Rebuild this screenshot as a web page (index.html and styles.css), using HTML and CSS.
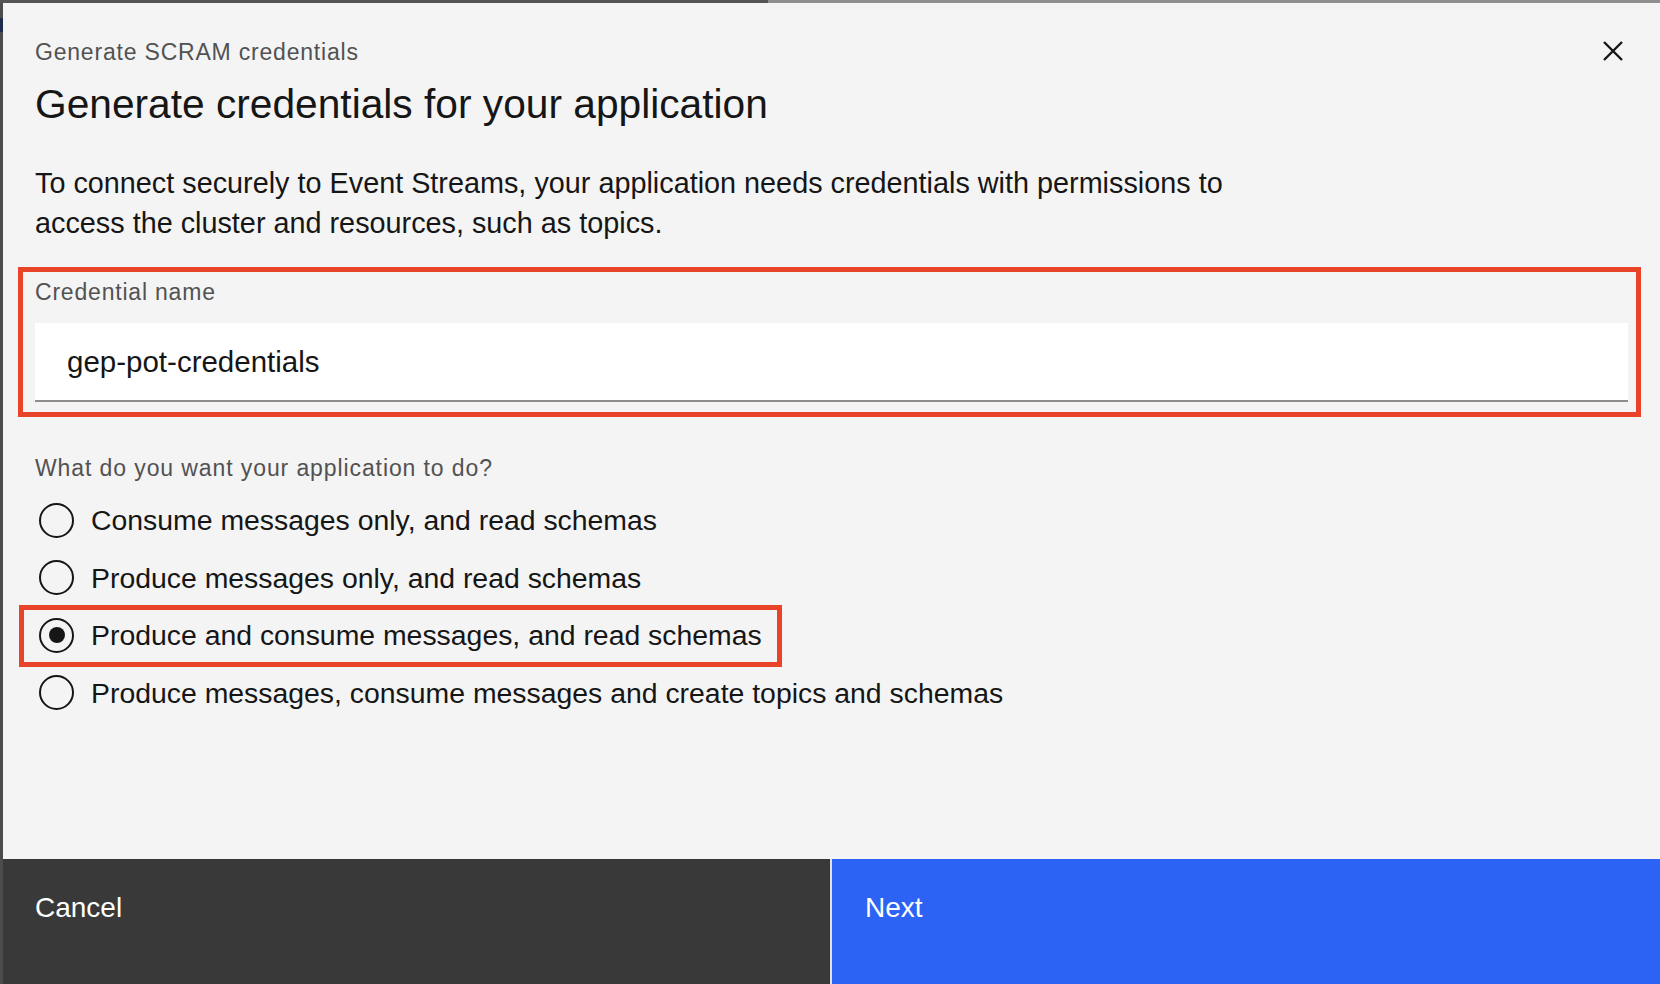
FILE: index.html
```html
<!DOCTYPE html>
<html lang="en">
<head>
<meta charset="utf-8">
<title>Generate SCRAM credentials</title>
<link rel="stylesheet" href="styles.css">
</head>
<body>
<div class="screen">
  <div class="top-strip">
    <span class="top-strip-dark"></span>
    <span class="top-strip-light"></span>
  </div>
  <div class="screen-row">
    <div class="left-strip"><span class="left-strip-accent"></span></div>
    <div class="modal" role="dialog" aria-labelledby="modal-title">
      <div class="modal-header">
        <div class="heading">
          <p class="modal-label">Generate SCRAM credentials</p>
          <h2 class="modal-title" id="modal-title">Generate credentials for your application</h2>
        </div>
        <button class="close-btn" type="button" aria-label="Close">
          <svg width="20" height="20" viewBox="0 0 20 20" aria-hidden="true">
            <path d="M1 1 L19 19 M19 1 L1 19" stroke="#161616" stroke-width="2.4" fill="none"/>
          </svg>
        </button>
      </div>
      <div class="modal-body">
        <p class="intro">To connect securely to Event Streams, your application needs credentials with permissions to access the cluster and resources, such as topics.</p>
        <div class="field annot">
          <label class="field-label" for="cred-name">Credential name</label>
          <div class="text-input" id="cred-name">gep-pot-credentials</div>
        </div>
        <p class="question">What do you want your application to do?</p>
        <div class="radio-group">
          <div class="radio-item"><span class="radio"></span><span class="radio-text">Consume messages only, and read schemas</span></div>
          <div class="radio-item"><span class="radio"></span><span class="radio-text">Produce messages only, and read schemas</span></div>
          <div class="radio-item annot annot-radio"><span class="radio checked"></span><span class="radio-text">Produce and consume messages, and read schemas</span></div>
          <div class="radio-item"><span class="radio"></span><span class="radio-text">Produce messages, consume messages and create topics and schemas</span></div>
        </div>
      </div>
      <div class="modal-footer">
        <button class="btn btn-secondary" type="button">Cancel</button>
        <button class="btn btn-primary" type="button">Next</button>
      </div>
    </div>
  </div>
</div>
</body>
</html>
```

FILE: styles.css
```css
* { box-sizing: border-box; }

html, body {
  margin: 0;
  padding: 0;
  width: 1660px;
  height: 984px;
  overflow: hidden;
  font-family: "Liberation Sans", Arial, sans-serif;
  color: #161616;
}

.screen {
  display: flex;
  flex-direction: column;
  width: 1660px;
  height: 984px;
  background: #4a4a4a;
}

.top-strip {
  display: flex;
  height: 3px;
  flex: none;
}
.top-strip-dark { width: 768px; background: #555555; }
.top-strip-light { flex: 1; background: #8f8f8f; }

.screen-row {
  display: flex;
  flex: 1;
  min-height: 0;
}

.left-strip {
  width: 3px;
  flex: none;
  background: #4c4c4c;
  padding-top: 15px;
}
.left-strip-accent {
  display: block;
  height: 14px;
  background: #1f2d4d;
}

.modal {
  flex: 1;
  display: flex;
  flex-direction: column;
  background: #f4f4f4;
}

.modal-header {
  display: flex;
  justify-content: space-between;
  align-items: flex-start;
  padding: 24px 23px 0 32px;
}

.heading { padding-top: 11px; }

.modal-label {
  margin: 0;
  font-size: 23px;
  line-height: 28px;
  letter-spacing: 0.8px;
  color: #525252;
}

.modal-title {
  margin: 14px 0 0;
  font-size: 40.7px;
  line-height: 48px;
  font-weight: 400;
  color: #161616;
}

.close-btn {
  width: 48px;
  height: 48px;
  border: 0;
  padding: 0;
  background: transparent;
  display: flex;
  align-items: center;
  justify-content: center;
}

.modal-body {
  padding: 0 32px;
  display: flex;
  flex-direction: column;
}

.intro {
  margin: 35px 0 0;
  max-width: 1260px;
  font-size: 28.8px;
  line-height: 40px;
  color: #161616;
}

.annot { border: 5px solid #e9442a; }

.field {
  margin: 24px -13px 0 -17px;
  padding: 6px 8px 10px 12px;
  display: flex;
  flex-direction: column;
}

.field-label {
  font-size: 23px;
  line-height: 28px;
  letter-spacing: 0.8px;
  color: #525252;
}

.text-input {
  margin-top: 17px;
  height: 79px;
  background: #ffffff;
  border-bottom: 2px solid #8d8d8d;
  padding: 0 32px;
  display: flex;
  align-items: center;
  font-size: 29.5px;
  color: #161616;
}

.question {
  margin: 37px 0 0;
  font-size: 23px;
  line-height: 28px;
  letter-spacing: 0.9px;
  color: #525252;
}

.radio-group {
  margin-top: 18px;
  display: flex;
  flex-direction: column;
  gap: 17.5px;
}

.radio-item {
  display: flex;
  align-items: center;
  height: 40px;
  align-self: flex-start;
}

.radio {
  width: 35px;
  height: 35px;
  margin-left: 4px;
  border: 2.5px solid #161616;
  border-radius: 50%;
  display: flex;
  align-items: center;
  justify-content: center;
  flex: none;
}
.radio.checked::after {
  content: "";
  width: 16px;
  height: 16px;
  border-radius: 50%;
  background: #161616;
}

.radio-text {
  margin-left: 17px;
  font-size: 28.4px;
  line-height: 40px;
  white-space: nowrap;
}

.annot-radio {
  height: 62px;
  margin: -10px 0 -12px -16px;
  padding: 5px 15px 7px 11px;
}

.modal-footer {
  margin-top: auto;
  height: 125px;
  display: grid;
  grid-template-columns: 827px 1fr;
  gap: 2px;
  background: #e0e0e0;
}

.btn {
  border: 0;
  margin: 0;
  padding: 35px 32px 0;
  text-align: left;
  font-family: inherit;
  font-size: 28px;
  line-height: 28px;
  color: #ffffff;
  display: flex;
  align-items: flex-start;
}
.btn-secondary { background: #393939; }
.btn-primary { background: #2c63f4; padding-left: 33px; }
```
